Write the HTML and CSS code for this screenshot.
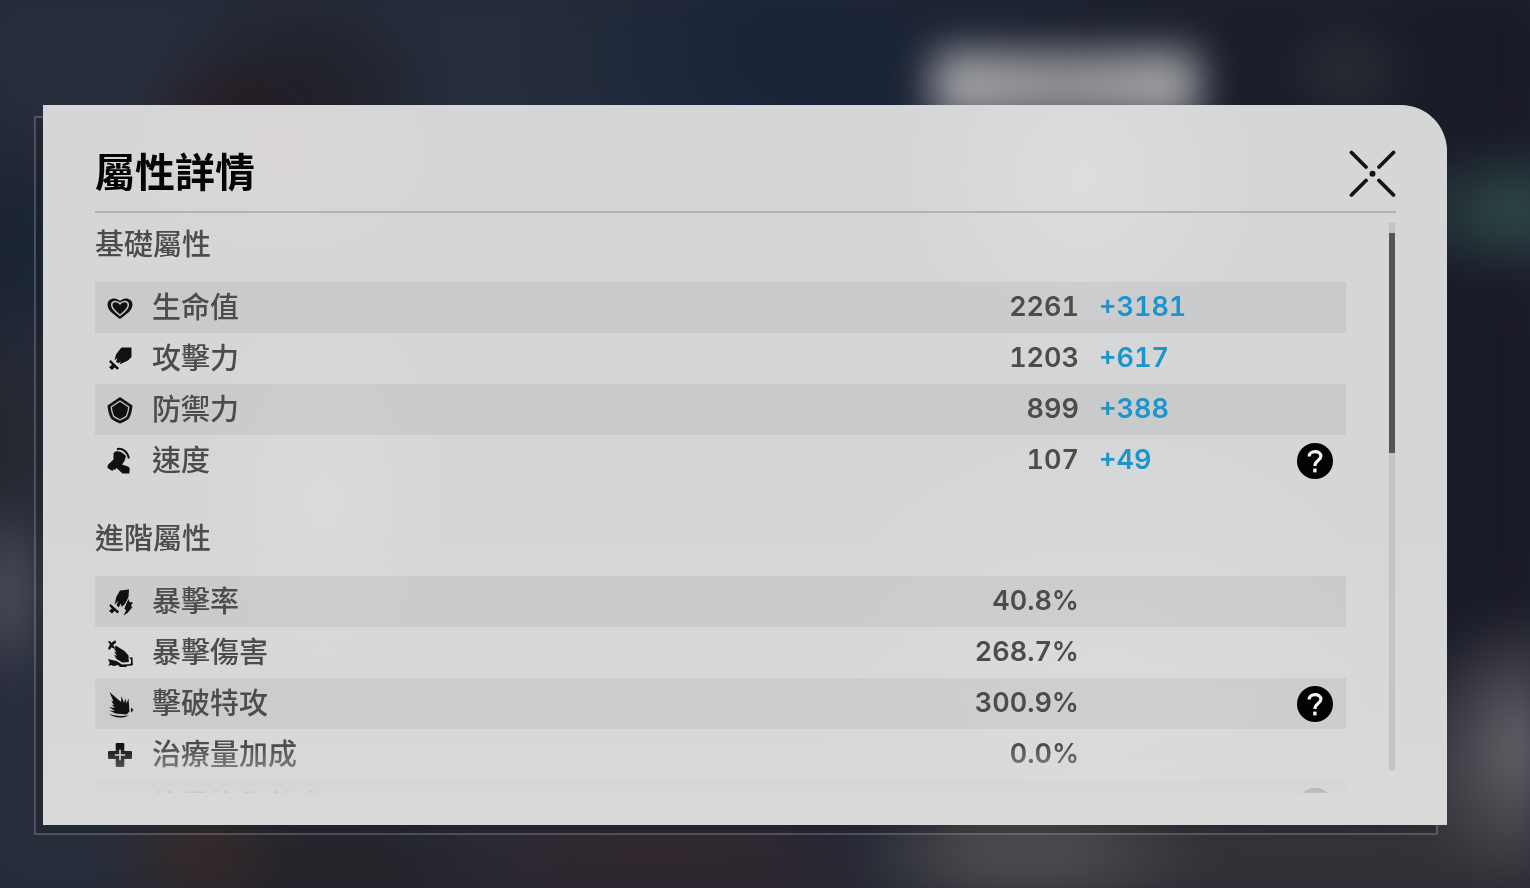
FILE: index.html
```html
<!DOCTYPE html>
<html lang="zh-Hant">
<head>
<meta charset="utf-8">
<meta name="viewport" content="width=device-width, initial-scale=1">
<title>屬性詳情</title>
<link rel="stylesheet" href="styles.css">
</head>
<body>
<main class="stage">
  <section class="panel" role="dialog" aria-labelledby="title">
    <div class="sheet">
      <header class="header">
        <h1 class="title" id="title">屬性詳情</h1>
        <button class="close" type="button" aria-label="關閉">
          <svg viewBox="0 0 48 48" width="48" height="48" fill="none" stroke="#141414" stroke-width="3.8" stroke-linecap="round"><path d="M3.500 2.500L18 17M45.500 2.500L31 17M3.500 45L18 30.500M45.500 45L31 30.500"/><circle cx="24.500" cy="23.800" r="3" fill="#141414" stroke="none"/></svg>
        </button>
      </header>
      <div class="body">
        <div class="list">
          <h2 class="group" id="base">基礎屬性</h2>
          <table class="stats" aria-labelledby="base">
            <colgroup><col class="c-icon"><col><col class="c-value"><col class="c-bonus"><col class="c-help"></colgroup>
            <tr>
              <td class="icon"><svg viewBox="0 0 26 26"><path d="M13 24C8 20 .5 16 .5 9.500C.5 3 9 1.500 13 6C17 1.500 25.500 3 25.500 9.500C25.500 16 18 20 13 24Z"/><path d="M13 20.300C9 17 4.700 14.200 4.700 10C4.700 5.700 10.200 5.500 13 8.800C15.800 5.500 21.300 5.700 21.300 10C21.300 14.200 17 17 13 20.300Z" fill="none" stroke="#cacbcc" stroke-width="1.500"/></svg></td>
              <th scope="row">生命值</th><td class="value">2261</td><td class="bonus">+3181</td><td></td>
            </tr>
            <tr>
              <td class="icon"><svg viewBox="0 0 26 26"><path d="M13.500 2.500L15 1.500L24.500 1.500V11L21 14.500L12.500 18.500L14 15.500L11.200 17.200L9 15.500L10.500 12L7.500 14.200L9 8.500Z"/><path d="M3.600 14L12 22L10.400 23.800L7.500 21.500L5 24L2 21.300L5 18.700L2 15.800Z"/></svg></td>
              <th scope="row">攻擊力</th><td class="value">1203</td><td class="bonus">+617</td><td></td>
            </tr>
            <tr>
              <td class="icon"><svg viewBox="0 0 26 26"><path d="M13 0L25.500 8.500C25 13 24.500 17 22 21.500C19 24 16 25 13 26.500C10 25 7 24 4 21.500C1.500 17 1 13 .5 8.500Z"/><path d="M13 4L21.800 10C21.400 13.500 20.800 16.500 19.300 19.500C17.200 21 15 21.900 13 22.800C11 21.900 8.800 21 6.700 19.500C5.200 16.500 4.600 13.500 4.200 10Z" fill="none" stroke="#cacbcc" stroke-width="1.300"/></svg></td>
              <th scope="row">防禦力</th><td class="value">899</td><td class="bonus">+388</td><td></td>
            </tr>
            <tr>
              <td class="icon"><svg viewBox="0 0 26 26"><path d="M8.500 3.500C12 2.500 15.500 4 19 8L17.500 13L15 16.500L21 18.500C23 19.500 23 21.500 22.300 25.500H15.500L9.500 20L8 22L6.500 21.300L5.500 23L.5 20L.8 17L6.500 11.500V5Z"/><path d="M10 1.200C15 -.5 20.800 3.500 21.800 10.500" fill="none" stroke="#111" stroke-width="2"/></svg></td>
              <th scope="row">速度</th><td class="value">107</td><td class="bonus">+49</td>
              <td class="help-cell"><button class="help" type="button" aria-label="速度說明"><svg viewBox="0 0 36 36"><path d="M12.200 13.400C12.200 7 23.900 7 23.900 13.300C23.900 17.300 17.900 17.300 17.900 23" fill="none" stroke="#f4f4f4" stroke-width="3.200"/><rect x="16.200" y="25.600" width="3.400" height="3.800" fill="#f4f4f4"/></svg></button></td>
            </tr>
          </table>
          <h2 class="group group-next" id="advanced">進階屬性</h2>
          <table class="stats" aria-labelledby="advanced">
            <colgroup><col class="c-icon"><col><col class="c-value"><col class="c-bonus"><col class="c-help"></colgroup>
            <tr>
              <td class="icon"><svg viewBox="0 0 26 26"><path d="M13 1.500L22 .5L21.500 8L18 15L14.500 18L14 14.500L11.500 18.500L9.500 16L11.500 12L7.500 15.500L9.500 7.500Z"/><path d="M3.500 15L12 22.500L10.500 24.500L7.500 22L5 24.500L2 22L4.800 19.500L2.300 16.800Z"/><path d="M21.500 10L22.500 13L26 13.500L23.800 17L25.500 18L20.500 24L16.500 26.500L19.300 21L17.300 20L19 15.500Z"/></svg></td>
              <th scope="row">暴擊率</th><td class="value">40.8%</td><td class="bonus"></td><td></td>
            </tr>
            <tr>
              <td class="icon"><svg viewBox="0 0 26 26"><path d="M1 1.500L3.300 1L4 3L8.300 .3L9.200 2.300L6 5.500L8 7L6.500 8.500L4.500 7.300L2.500 10L1 8.500L3 4.500Z"/><path d="M8.700 5.500L17.500 11L21.500 15.500L21.800 22L15.500 22.500L9.500 19L7 14.500L10 16L7 11.500L9.500 12.500L7.200 9Z"/><path d="M1 19L5 20L9.500 21L15 24.500L22 24.300L24 23.500V20L22.500 17.500L25.500 17.300V20L26 25L22 26L21 25.500L19 27H13L11 25L7 26L3.500 25L1 26L2.800 23Z"/></svg></td>
              <th scope="row">暴擊傷害</th><td class="value">268.7%</td><td class="bonus"></td><td></td>
            </tr>
            <tr>
              <td class="icon"><svg viewBox="0 0 26 26"><path d="M2.500 1L14 11L14.500 5L17 12L18.500 7.500L19.500 12.500L21.500 7.500L22.500 20.500L19.500 23.500L8.500 22.500L2.300 19.500L8 20L2 16L8 17L4.500 13.500L7 14.500L4.300 9.500L6.500 10.500Z"/><path d="M2 22.500C8 25.500 16 25 22 24.500C17 27.500 6 27.500 2 22.500ZM24 16.500L26.500 19L24 21.500Z"/></svg></td>
              <th scope="row">擊破特攻</th><td class="value">300.9%</td><td class="bonus"></td>
              <td class="help-cell"><button class="help" type="button" aria-label="擊破特攻說明"><svg viewBox="0 0 36 36"><path d="M12.200 13.400C12.200 7 23.900 7 23.900 13.300C23.900 17.300 17.900 17.300 17.900 23" fill="none" stroke="#f4f4f4" stroke-width="3.200"/><rect x="16.200" y="25.600" width="3.400" height="3.800" fill="#f4f4f4"/></svg></button></td>
            </tr>
            <tr>
              <td class="icon"><svg viewBox="0 0 26 26"><path d="M9.500 1H16.500L17.300 1.800V9H24.200L25 9.800V16.200L24.200 17H17.300V24.200L16.500 25H9.500L8.700 24.200V17H1.800L1 16.200V9.800L1.800 9H8.700V1.800Z"/><path d="M13 7.800V18.200M7.800 13H18.200" fill="none" stroke="#d6d6d6" stroke-width="1.600"/></svg></td>
              <th scope="row">治療量加成</th><td class="value">0.0%</td><td class="bonus"></td><td></td>
            </tr>
            <tr>
              <td class="icon"></td>
              <th scope="row">能量恢復效率</th><td class="value"></td><td class="bonus"></td>
              <td class="help-cell"><button class="help" type="button" aria-label="能量恢復效率說明"></button></td>
            </tr>
          </table>
        </div>
        <div class="track"><div class="thumb"></div></div>
      </div>
    </div>
  </section>
</main>
</body>
</html>
```
FILE: styles.css
```css
* { box-sizing: border-box; }

body {
  margin: 0;
  overflow: hidden;
  background: #232734;
  color: #4c4c4c;
  font-family: Roboto, "Noto Sans CJK TC", sans-serif;
}

/* Out-of-focus scene behind the dialog */
body::before {
  content: "";
  position: fixed;
  z-index: -1;
  inset: 0;
  filter: blur(20px);
  transform: scale(1.02);
  background:
    linear-gradient(90deg, #a4a5a8, #8f9093 50%, #a4a5a8) 930px 58px / 260px 70px no-repeat,
    radial-gradient(ellipse 70px 60px at 1335px 78px, #2d2e36, transparent),
    radial-gradient(ellipse 90px 40px at 240px 118px, #2c181c, transparent),
    radial-gradient(ellipse 150px 110px at 310px 100px, #20212a 30%, transparent),
    radial-gradient(ellipse 170px 70px at 1530px 216px, #345452, transparent),
    radial-gradient(ellipse 150px 140px at 1530px 740px, #737075, transparent),
    radial-gradient(ellipse 70px 100px at 0 590px, #5f5e69, transparent),
    radial-gradient(ellipse 100px 120px at 0 440px, #262529, transparent),
    radial-gradient(ellipse 90px 90px at 210px 850px, #382a28, transparent),
    radial-gradient(ellipse 180px 120px at 1020px 850px, #4b494c 30%, transparent),
    radial-gradient(ellipse 260px 140px at 660px 880px, #30272f 40%, transparent),
    radial-gradient(ellipse 220px 120px at 340px 888px, #242329 40%, transparent),
    radial-gradient(ellipse 460px 180px at 1300px 888px, #343238 40%, transparent),
    radial-gradient(ellipse 260px 200px at 780px 60px, #182338, transparent),
    radial-gradient(ellipse 140px 160px at 0 250px, #15202e, transparent),
    linear-gradient(90deg, #292e3d 0, #252d3d 45%, #1b2130 62%, #191a25 100%);
}

.stage {
  display: flex;
  height: 100vh;
  min-height: 480px;
  padding: 105px 83px 63px 43px;
}

.panel {
  position: relative;
  z-index: 0;
  display: flex;
  flex: 1;
  min-width: 0;
}

.panel::before {
  content: "";
  position: absolute;
  z-index: -1;
  top: 11px;
  right: 9px;
  bottom: -10px;
  left: -9px;
  border: 2px solid rgba(255, 255, 255, .2);
  border-radius: 0 46px 0 0;
  background: rgba(20, 20, 26, .2);
}

.sheet {
  display: flex;
  flex: 1;
  flex-direction: column;
  min-width: 0;
  padding: 37px 51px 32px 52px;
  border-radius: 0 46px 0 0;
  background:
    radial-gradient(ellipse 170px 180px at 74% 10%, #dedddd, transparent),
    radial-gradient(ellipse 180px 130px at 17% 6%, #dad6d6, transparent),
    radial-gradient(ellipse 120px 200px at 20% 55%, #dbdbdc, transparent),
    radial-gradient(ellipse 300px 260px at 76% 82%, #dbdbdb, transparent),
    linear-gradient(#d5d6d8 60%, #d9d9d9);
}

.header {
  display: flex;
  align-items: center;
  justify-content: space-between;
  height: 71px;
  padding-bottom: 6px;
  border-bottom: 2px solid #b2b3b4;
}

.title {
  margin: 0;
  color: #050505;
  font-size: 40px;
  line-height: 60px;
  font-weight: 700;
}

.close {
  width: 48px;
  height: 48px;
  padding: 0;
  border: 0;
  background: none;
  cursor: pointer;
}

.close svg { display: block; }

.body {
  display: flex;
  flex: 1;
  gap: 43px;
  min-height: 0;
}

.list {
  flex: 1;
  min-width: 0;
  overflow-y: auto;
  scrollbar-width: none;
  mask-image: linear-gradient(#000 calc(100% - 48px), rgba(0, 0, 0, .7) calc(100% - 28px), rgba(0, 0, 0, .25) calc(100% - 12px), rgba(0, 0, 0, .1));
}

.group {
  margin: 0;
  padding: 10px 0 15px;
  font-size: 29px;
  line-height: 44px;
  font-weight: 500;
}

.group-next { margin-top: 21px; }

.stats {
  width: 100%;
  border-collapse: collapse;
  table-layout: fixed;
  font-size: 27px;
  font-weight: 600;
  line-height: 44px;
}

.c-icon { width: 57px; }
.c-value { width: 160px; }
.c-bonus { width: 180px; }
.c-help { width: 87px; }

.stats td,
.stats th {
  height: 51px;
  padding: 0;
  text-align: left;
  vertical-align: middle;
  white-space: nowrap;
}

.stats th {
  font-size: 29px;
  font-weight: 500;
}

.stats tr:nth-child(odd) { background: rgba(0, 0, 0, .055); }

.stats .icon { padding-left: 12px; }

.icon svg {
  display: block;
  width: 26px;
  height: 26px;
  overflow: visible;
  fill: #111;
}

.stats .value,
.stats .bonus {
  padding-bottom: 2px;
  font-family: Inter, Roboto, sans-serif;
  font-variant-numeric: tabular-nums;
}

.stats .value { text-align: right; }

.stats .bonus {
  padding-left: 20px;
  color: #1c94cc;
}

.stats .help-cell { padding-right: 13px; }

.help {
  display: block;
  width: 36px;
  height: 36px;
  margin-left: auto;
  padding: 0;
  border: 0;
  border-radius: 50%;
  background: #030303;
  cursor: pointer;
}

.help svg { display: block; }

.track {
  width: 6px;
  margin: 10px 1px 23px 0;
  padding-top: 10px;
  background: #c3c4c5;
}

.thumb {
  height: 41%;
  background: #555;
}
```
